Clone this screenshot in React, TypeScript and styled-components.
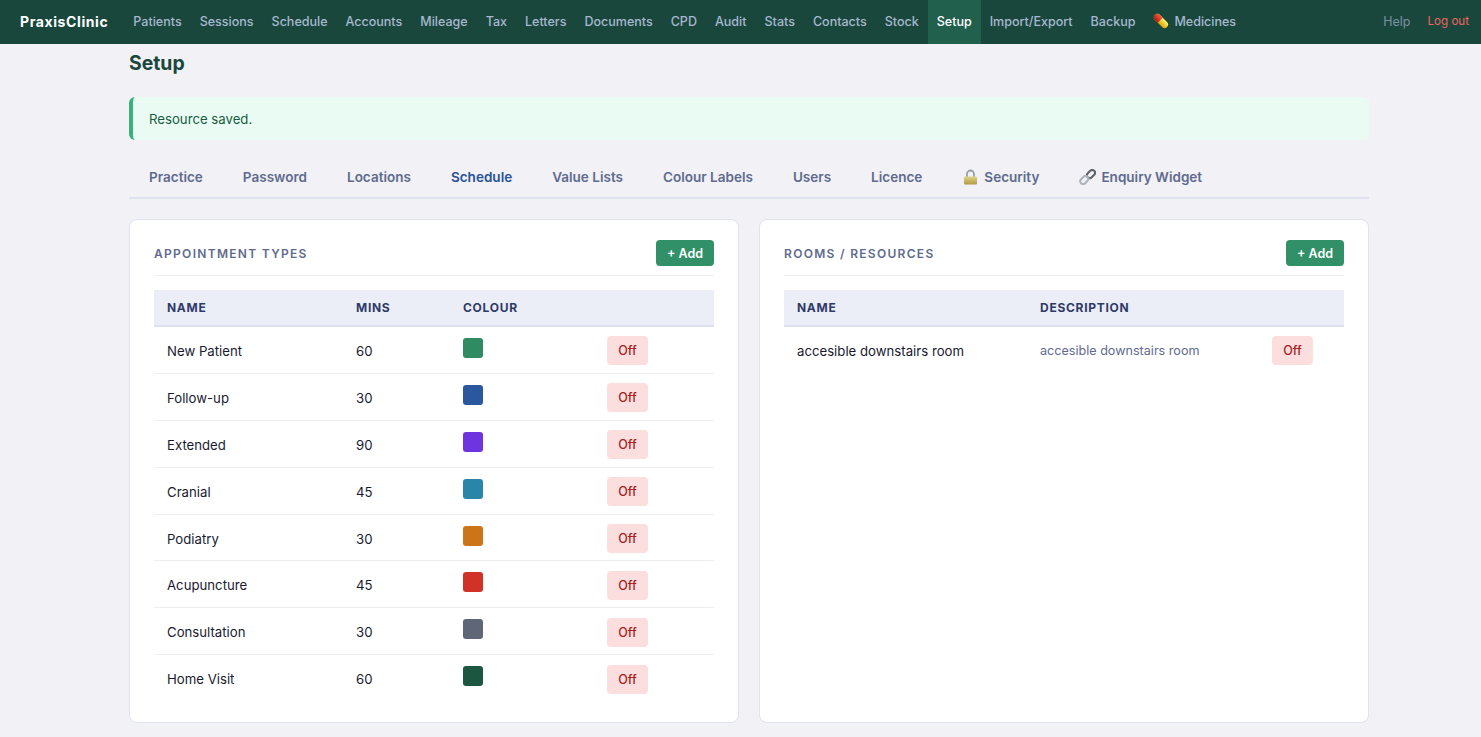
import React from "react";
import styled, { createGlobalStyle } from "styled-components";

const Global = createGlobalStyle`
  html, body { margin: 0; padding: 0; background: #f1f1f6; }
  body { font-family: Inter, "Liberation Sans", sans-serif; color: #1a1a2e; }
  * { box-sizing: border-box; }
`;

const TopBar = styled.nav`
  height: 44px;
  background: #1a473c;
  display: flex;
  align-items: stretch;
  padding: 0 12px 0 20px;
`;
const Brand = styled.a`
  align-self: center;
  font-size: 14px;
  font-weight: 700;
  letter-spacing: 0.6px;
  color: #fff;
  margin-right: 16px;
  position: relative;
  top: -1px;
`;
const NavItem = styled.a<{ $active?: boolean }>`
  display: flex;
  align-items: center;
  gap: 5px;
  padding: 0 9px 2px;
  font-size: 12.52px;
  font-weight: 500;
  color: ${(p) => (p.$active ? "#fff" : "#a6b8cf")};
  background: ${(p) => (p.$active ? "#22604e" : "transparent")};
`;
const NavRight = styled.div`
  margin-left: auto;
  padding-bottom: 2px;
  display: flex;
  align-items: center;
  gap: 17px;
`;
const Help = styled.a`
  color: #7a91a3;
  font-size: 12.5px;
`;
const Logout = styled.a`
  color: #f0635f;
  font-size: 11.6px;
`;
const Page = styled.main`
  width: 1240px;
  margin-left: 129px;
`;
const Title = styled.h1`
  margin: 0;
  padding-top: 6px;
  height: 53px;
  font-size: 19.4px;
  line-height: 26px;
  font-weight: 700;
  color: #1a473c;
`;
const Alert = styled.div`
  height: 43px;
  display: flex;
  align-items: center;
  padding-left: 16px;
  background: #e9fbf3;
  border-left: 4px solid #38b27c;
  border-radius: 6px;
  font-size: 13.2px;
  font-weight: 400;
  color: #1a5c42;
`;
const Tabs = styled.div`
  margin-top: 17px;
  height: 42px;
  display: flex;
  border-bottom: 2px solid #dfe1ee;
`;
const Tab = styled.a<{ $active?: boolean }>`
  display: flex;
  align-items: center;
  gap: 5px;
  padding: 0 20px;
  font-size: 13.54px;
  font-weight: 600;
  color: ${(p) => (p.$active ? "#2a5298" : "#5f6b8e")};
`;
const Columns = styled.div`
  margin-top: 20px;
  display: grid;
  grid-template-columns: 610px 610px;
  gap: 20px;
`;
const Card = styled.section`
  height: 504px;
  background: #fff;
  border: 1px solid #dfe3ee;
  border-radius: 8px;
  padding: 20px 24px;
`;
const CardHead = styled.header`
  height: 36px;
  display: flex;
  justify-content: space-between;
  align-items: flex-start;
  border-bottom: 1px solid #eceef4;
`;
const CardTitle = styled.h2`
  margin: 0;
  font-size: 12px;
  line-height: 27px;
  font-weight: 600;
  letter-spacing: 1.3px;
  text-transform: uppercase;
  color: #5f6b8e;
`;
const AddButton = styled.button`
  width: 58px;
  height: 26px;
  padding: 0;
  border: 0;
  border-radius: 4px;
  background: #319068;
  color: #fff;
  font: 600 12.5px Inter, sans-serif;
`;
const Table = styled.table`
  width: 100%;
  margin-top: 14px;
  border-collapse: separate;
  border-spacing: 0;
  table-layout: fixed;
`;
const Col = styled.col<{ $w: number }>`
  width: ${(p) => p.$w}px;
`;
const Th = styled.th`
  height: 37px;
  padding: 0 13px;
  text-align: left;
  background: #ebeef7;
  border-bottom: 2px solid #dde1ed;
  font-size: 12px;
  font-weight: 700;
  letter-spacing: 0.72px;
  text-transform: uppercase;
  color: #2f3a68;
`;
const Tr = styled.tr`
  height: 46.9px;
  & td { border-bottom: 1px solid #eceef4; }
  &:last-child td { border-bottom-color: transparent; }
`;
const Td = styled.td`
  padding: 0 13px;
  vertical-align: middle;
`;
const TextCell = styled(Td)`
  padding-top: 2px;
  font-size: 13.2px;
  color: #1a1a2e;
`;
const DescCell = styled(Td)`
  padding-top: 2px;
  font-size: 12.6px;
  color: #5f6b8e;
`;
const Swatch = styled.span<{ $c: string }>`
  display: block;
  width: 20px;
  height: 20px;
  border-radius: 3px;
  background: ${(p) => p.$c};
  position: relative;
  top: -2px;
`;
const OffButton = styled.button`
  display: block;
  width: 41px;
  height: 29px;
  margin-top: 2px;
  padding: 0;
  border: 0;
  border-radius: 4px;
  background: #fcdede;
  color: #a81e1e;
  font: 500 12.5px Inter, sans-serif;
`;

const Pill = () => (
  <svg width="16" height="16" viewBox="0 0 16 16">
    <defs>
      <linearGradient id="pr" x1="0" y1="0" x2="0" y2="1"><stop offset="0" stopColor="#f4603f" /><stop offset="1" stopColor="#b41a12" /></linearGradient>
      <linearGradient id="py" x1="0" y1="0" x2="0" y2="1"><stop offset="0" stopColor="#fff36a" /><stop offset="1" stopColor="#d8a40a" /></linearGradient>
    </defs>
    <g transform="rotate(45 8 8)">
      <rect x="-0.5" y="4.5" width="17" height="7" rx="3.5" fill="url(#py)" />
      <path d="M7 4.5H3a3.5 3.5 0 0 0 0 7h4z" fill="url(#pr)" />
    </g>
  </svg>
);
const Lock = () => (
  <svg width="17" height="16" viewBox="0 0 17 16">
    <defs>
      <linearGradient id="lk" x1="0" y1="0" x2="0" y2="1"><stop offset="0" stopColor="#e2d38a" /><stop offset="1" stopColor="#b09a45" /></linearGradient>
    </defs>
    <path d="M5 8V5a3.5 3.5 0 0 1 7 0v3" fill="none" stroke="#9a9ea6" strokeWidth="1.8" />
    <rect x="2" y="7.5" width="13" height="8" rx="1.2" fill="url(#lk)" />
  </svg>
);
const Link = () => (
  <svg width="17" height="16" viewBox="0 0 17 16" fill="none">
    <rect x="7.5" y="2.2" width="9" height="5.6" rx="2.8" transform="rotate(-45 12 5)" stroke="#5c6068" strokeWidth="2" />
    <rect x="0.8" y="8.2" width="9" height="5.6" rx="2.8" transform="rotate(-45 5.3 11)" stroke="#aeb2b9" strokeWidth="2" />
  </svg>
);

const navItems = ["Patients", "Sessions", "Schedule", "Accounts", "Mileage", "Tax", "Letters", "Documents", "CPD", "Audit", "Stats", "Contacts", "Stock"];
const tabs = ["Practice", "Password", "Locations", "Schedule", "Value Lists", "Colour Labels", "Users", "Licence"];
const types: [string, number, string][] = [
  ["New Patient", 60, "#2e8b62"],
  ["Follow-up", 30, "#2a579e"],
  ["Extended", 90, "#6d34e0"],
  ["Cranial", 45, "#2a86a8"],
  ["Podiatry", 30, "#cc7518"],
  ["Acupuncture", 45, "#d13228"],
  ["Consultation", 30, "#5f6678"],
  ["Home Visit", 60, "#1d5640"],
];

export default function App() {
  return (
    <>
      <Global />
      <TopBar>
        <Brand>PraxisClinic</Brand>
        {navItems.map((n) => <NavItem key={n}>{n}</NavItem>)}
        <NavItem $active>Setup</NavItem>
        <NavItem>Import/Export</NavItem>
        <NavItem>Backup</NavItem>
        <NavItem><Pill />Medicines</NavItem>
        <NavRight>
          <Help>Help</Help>
          <Logout>Log out</Logout>
        </NavRight>
      </TopBar>
      <Page>
        <Title>Setup</Title>
        <Alert>Resource saved.</Alert>
        <Tabs>
          {tabs.map((t) => <Tab key={t} $active={t === "Schedule"}>{t}</Tab>)}
          <Tab><Lock />Security</Tab>
          <Tab><Link />Enquiry Widget</Tab>
        </Tabs>
        <Columns>
          <Card>
            <CardHead>
              <CardTitle>Appointment Types</CardTitle>
              <AddButton>+ Add</AddButton>
            </CardHead>
            <Table>
              <colgroup><Col $w={189} /><Col $w={107} /><Col $w={144} /><Col $w={120} /></colgroup>
              <thead><tr><Th>Name</Th><Th>Mins</Th><Th>Colour</Th><Th /></tr></thead>
              <tbody>
                {types.map(([name, mins, colour]) => (
                  <Tr key={name}>
                    <TextCell>{name}</TextCell>
                    <TextCell>{mins}</TextCell>
                    <Td><Swatch $c={colour} /></Td>
                    <Td><OffButton>Off</OffButton></Td>
                  </Tr>
                ))}
              </tbody>
            </Table>
          </Card>
          <Card>
            <CardHead>
              <CardTitle>Rooms / Resources</CardTitle>
              <AddButton>+ Add</AddButton>
            </CardHead>
            <Table>
              <colgroup><Col $w={243} /><Col $w={232} /><Col $w={85} /></colgroup>
              <thead><tr><Th>Name</Th><Th>Description</Th><Th /></tr></thead>
              <tbody>
                <Tr>
                  <TextCell>accesible downstairs room</TextCell>
                  <DescCell>accesible downstairs room</DescCell>
                  <Td><OffButton>Off</OffButton></Td>
                </Tr>
              </tbody>
            </Table>
          </Card>
        </Columns>
      </Page>
    </>
  );
}
